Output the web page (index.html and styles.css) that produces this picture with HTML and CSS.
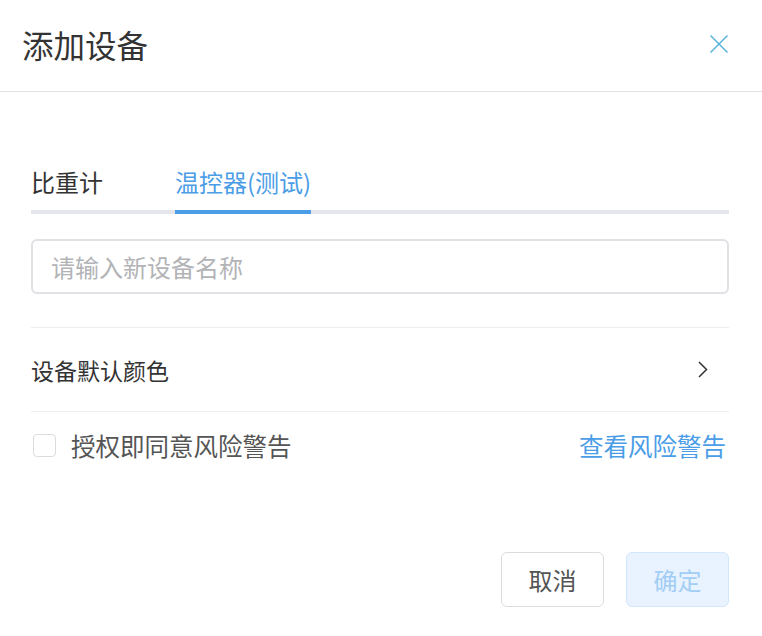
FILE: index.html
```html
<!DOCTYPE html>
<html lang="zh-CN">
<head>
<meta charset="utf-8">
<title>添加设备</title>
<link rel="stylesheet" href="styles.css">
</head>
<body>
<div class="dialog">
  <header class="dialog-header">
    <h1 class="dialog-title">添加设备</h1>
    <button class="close-btn" aria-label="关闭">
      <svg width="20" height="20" viewBox="0 0 20 20"><path d="M1.5 1.5 L18.5 18.5 M18.5 1.5 L1.5 18.5" stroke="#5fb6da" stroke-width="1.6" fill="none"/></svg>
    </button>
  </header>
  <main class="dialog-body">
    <nav class="tabs">
      <div class="tab">比重计</div>
      <div class="tab active">温控器(测试)</div>
    </nav>
    <input class="name-input" type="text" placeholder="请输入新设备名称">
    <div class="row color-row">
      <span class="row-label">设备默认颜色</span>
      <svg class="chevron" width="10" height="17" viewBox="0 0 10 17"><path d="M1 1 L8.5 8.5 L1 16" stroke="#333" stroke-width="1.5" fill="none"/></svg>
    </div>
    <div class="row agree-row">
      <label class="agree">
        <span class="checkbox"></span>
        <span class="agree-text">授权即同意风险警告</span>
      </label>
      <a class="link">查看风险警告</a>
    </div>
  </main>
  <footer class="dialog-footer">
    <button class="btn btn-cancel">取消</button>
    <button class="btn btn-ok">确定</button>
  </footer>
</div>
</body>
</html>
```

FILE: styles.css
```css
* { box-sizing: border-box; }
html, body { margin: 0; padding: 0; background: #fff; }
body {
  font-family: "Noto Sans CJK SC", "Noto Sans", sans-serif;
  color: #333;
  width: 762px;
  height: 636px;
  overflow: hidden;
}
.dialog { width: 762px; }
.dialog-header {
  height: 92px;
  border-bottom: 1px solid #e2e2e2;
  display: flex;
  align-items: center;
  justify-content: space-between;
  padding: 0 33px 4px 22px;
}
.dialog-title {
  margin: 0;
  font-size: 31.5px;
  font-weight: 400;
  color: #333;
  line-height: 40px;
}
.close-btn {
  border: 0;
  background: none;
  padding: 0;
  width: 20px;
  height: 20px;
  display: flex;
  cursor: pointer;
}
.dialog-body {
  padding: 0 33px 0 31px;
}
.tabs {
  margin-top: 72px;
  display: flex;
  gap: 72px;
  border-bottom: 4px solid #e5e6ec;
}
.tab {
  font-size: 24px;
  line-height: 36px;
  padding-bottom: 10px;
  margin-bottom: -4px;
  border-bottom: 4px solid transparent;
  color: #333;
}
.tab.active {
  color: #4a9de6;
  border-bottom-color: #4a9de6;
}
.name-input {
  display: block;
  width: 100%;
  height: 55px;
  margin-top: 25px;
  border: 2px solid #e0e1e5;
  border-radius: 6px;
  padding: 0 18px;
  font-family: inherit;
  font-size: 24px;
  color: #333;
  outline: none;
}
.name-input::placeholder { color: #b2b3b6; }
.row {
  display: flex;
  align-items: center;
  justify-content: space-between;
}
.color-row {
  margin-top: 33px;
  height: 85px;
  border-top: 1px solid #eeeeee;
  border-bottom: 1px solid #eeeeee;
  padding-right: 21px;
}
.row-label {
  font-size: 23px;
  color: #333;
}
.agree-row {
  height: 66px;
  padding-right: 3px;
}
.agree {
  display: flex;
  align-items: center;
  gap: 15px;
  padding-left: 2px;
}
.checkbox {
  width: 23px;
  height: 23px;
  border: 1px solid #dcdcdc;
  border-radius: 4px;
  background: #fff;
}
.agree-text {
  font-size: 24.5px;
  color: #555;
}
.link {
  font-size: 24.5px;
  color: #4a9de6;
  cursor: pointer;
}
.dialog-footer {
  display: flex;
  justify-content: flex-end;
  gap: 22px;
  padding: 0 33px 0 0;
  margin-top: 74px;
}
.btn {
  width: 103px;
  height: 55px;
  border-radius: 6px;
  font-family: inherit;
  font-size: 24px;
  padding: 0;
  cursor: pointer;
}
.btn-cancel {
  background: #fff;
  border: 1px solid #dcdcdc;
  color: #555;
}
.btn-ok {
  background: #e8f3ff;
  border: 1px solid #d3e6fb;
  color: #a2cdf5;
}
```
